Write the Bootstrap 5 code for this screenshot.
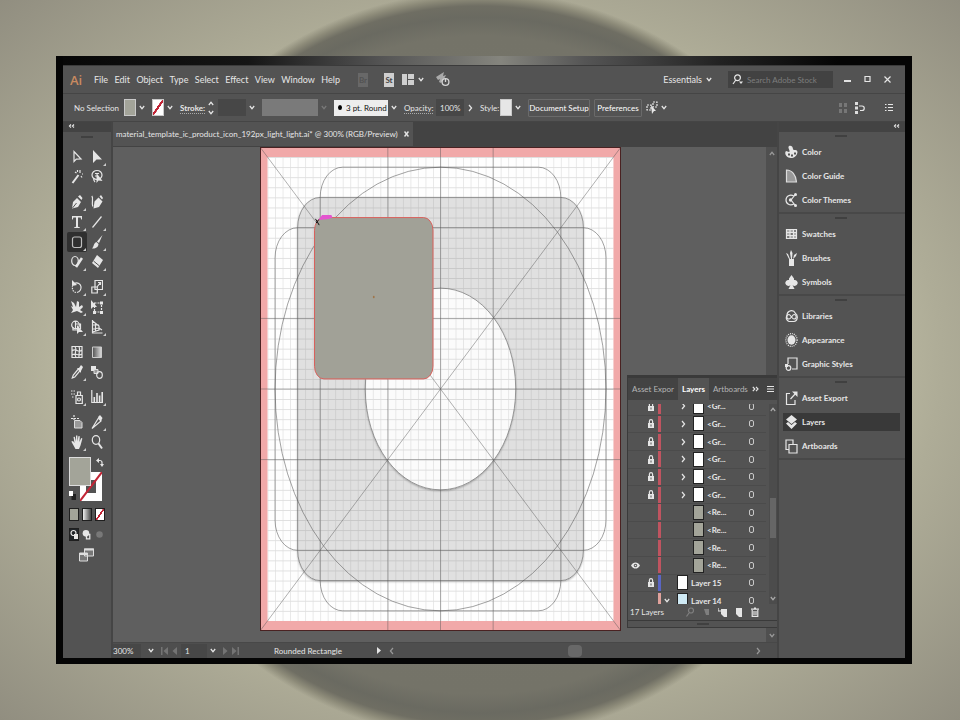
<!DOCTYPE html>
<html lang="en">
<head>
<meta charset="utf-8">
<meta name="viewport" content="width=device-width, initial-scale=1">
<title>Illustrator workspace</title>
<link href="https://cdn.jsdelivr.net/npm/bootstrap@5.3.0/dist/css/bootstrap.min.css" rel="stylesheet">
<style>
:root{--panel:#535353;--dark:#434343;--line:#454545;--ink:#e6e6e6;--swatch:#a3a499}
body{min-height:100vh;padding:56px 48px 56px 56px;color:var(--ink);line-height:12px;
 font-family:Lato,"Open Sans",sans-serif;font-size:8px;
 background:radial-gradient(circle 374px at 50% 365px,#77766a 0,#747368 88%,#6a6a61 93%,#6f6e63 96%,#8d8b79 98%,transparent 100%),
 radial-gradient(ellipse at 50% 50%,#c4c2a9 50%,#aeac97 68%,#918e80 100%)}
button,input,select{font:inherit;color:inherit;background:none;border:0;padding:0;margin:0;border-radius:0}
input,select{min-width:0;outline-offset:1px}
select{appearance:none}
svg{display:block;flex:none}
.i{fill:none;stroke:currentColor;stroke-width:1.2}
.f{fill:currentColor;stroke:none}
.frame-win{border:solid #050505;border-width:0 7px 6px 7px;background:#050505}
.desk-strip{height:9px;background:linear-gradient(90deg,#070707,#151515 22%,#555 38%,#85857e 52%,#555 62%,#222 78%,#050505 92%)}
.app{background:var(--panel);border-top:1px solid #3b3b3b}
.menubar{height:28px;padding-left:7px;border-bottom:1px solid var(--line)}
.brand{font-family:"Open Sans",sans-serif;font-size:13px;font-weight:600;color:#c98a60;width:24px}
.menus{justify-content:space-between;width:246px;margin-right:18px}
.menus button,.ess{font-size:9px}
.stock{width:10px;height:14px;background:#cfcfcf;color:#444;font-weight:700;line-height:14px;text-align:center}
.stock.off{background:#686868;color:#535353}
.searchbox{width:105px;height:17px;background:#424242}
.searchbox input::placeholder{color:#7d7d7d;opacity:1}
.winbtn{width:20px;height:20px;display:grid;place-items:center}
.ctl{height:28px;padding-left:11px;border-bottom:1px solid var(--line);white-space:nowrap}
.lab{text-decoration:underline dotted #aaa;text-underline-offset:2px}
.lab.heavy{font-weight:700}
.w20{width:20px}.w24{width:24px}.w26{width:26px}.w28{width:28px}.w50{width:50px}
.sw{width:12px;height:17px;background:var(--swatch);border:1px solid #c9c9c9}
.sw.pale{background:#e6e6e6}
.none{background:linear-gradient(125deg,#fff 43%,#c22536 44%,#c22536 56%,#fff 57%)}
.cv{width:12px;height:18px;display:grid;place-items:center}
.cv.off{opacity:.25}
.fld{height:17px;background:#474747}
.profile{width:56px;height:17px;background:#7a7a7a}
.brushsel{width:54px;height:16px;background:#ededed;color:#111;padding-left:4px}
.cbtn{height:18px;width:48px;border:1px solid #6a6a6a;border-radius:1px;text-align:center;color:#fff}
.cbtn.wide{width:62px}
.strip{height:10px;background:var(--dark)}
.tools{width:50px;border-right:2px solid var(--line)}
.grip{width:12px;height:2px;background:#404040}
.toolset{gap:5px;padding:9px 0 0 4px}
.toolgrid{grid-template-columns:20px 20px;grid-auto-rows:20px}
.tb{display:grid;place-items:center;position:relative}
.tb.flyout::after{content:"";position:absolute;right:1px;bottom:1px;border:solid transparent;border-width:0 0 3px 3px;border-bottom-color:#ccc}
.tb.on{background:#2f2f2f;border-radius:2px}
.tb.on svg{color:#bdbdbd}
.fillstroke{position:relative;width:40px;height:46px;margin:0 0 0 2px}
.fillstroke>*{position:absolute}
.sfill{left:0;top:0;width:22px;height:29px;background:var(--swatch);border:1px solid #ddd}
.sstroke{left:11px;top:15px;width:22px;height:29px}
.swap{left:27px;top:1px}.reset{left:0;top:34px}
.minis{gap:3px;padding:0 0 2px 2px}
.mini{width:10px;height:13px;border:1px solid #1f1f1f}
.mini.solid{background:var(--swatch)}.mini.grad{background:linear-gradient(90deg,#eee,#444)}
.tabs{height:25px;background:var(--dark)}
.tab{background:var(--panel);padding:0 4px 0 3px;gap:6px;width:max-content;height:24px;white-space:nowrap}
.canvas{background:#5f5f5f;padding-left:2px}
.board{width:361px;height:484px}
.vs{width:11px;background:#4f4f4f;padding:4px 0}
.status{height:16px;background:#4e4e4e;border-top:1px solid #484848}
.status .fld{height:14px}
.tip{width:138px;text-align:center}
.thumb{width:14px;height:12px;background:#686868;border-radius:4px}
.side{width:128px;border-left:2px solid var(--line)}
.grp{padding:8px 5px 0 4px;border-bottom:2px solid #484848;position:relative}
.grp .grip{position:absolute;left:56px;top:3px}
.pi{height:24px;padding:0 2px;width:100%;font-weight:700;gap:4px;text-align:left}
.pi.on{background:linear-gradient(#393939,#393939) center/100% 18px no-repeat}
.layers{position:absolute;right:0;bottom:14px;width:150px;background:var(--panel);border:solid #3a3a3a;border-width:3px 0 1px 1px}
.ltabs{height:22px;background:var(--dark)}
.ltabs .lt{height:22px;padding:0 4px;color:#b5b5b5}
.ltabs .lt.on{background:var(--panel);color:#fff;font-weight:700}
.lview{height:200px;overflow:hidden;margin-top:4px}
.lrows{height:212px;margin-top:-6px;display:grid;grid-template-rows:repeat(12,minmax(0,1fr));list-style:none;padding:0}
.lr{border-bottom:1px solid #4b4b4b;width:138px}
.lr .eye,.lr .lk{width:15px;height:16px;display:grid;place-items:center}
.lr .bar{width:3px;height:16px;background:#c05460}
.lr .bar.b{background:#5a66c4}.lr .bar.p{background:#e0a29c}
.lr .ex{width:12px;display:grid;place-items:center}
.th{width:11px;height:15px;border:1px solid #222;background:#fff}
.th.g{background:var(--swatch)}.th.s{background:#cfeaf5}
.lname{flex:1;padding-left:3px;font-weight:700;white-space:nowrap}
.tgt{width:5px;height:7px;border:1px solid #c8c8c8;border-radius:2px;margin-right:12px}
.lbar{width:8px;background:#4c4c4c;padding:3px 0}
.lbar i{display:block;width:6px;height:40px;background:#666;margin-top:86px}
.lfoot{height:16px;padding:0 2px}
.lgrip{height:7px;border-top:1px solid #3a3a3a;padding-top:2px}
</style>
<script src="https://cdn.jsdelivr.net/npm/bootstrap@5.3.0/dist/js/bootstrap.bundle.min.js"></script>
</head>
<body class="d-flex">
<svg width="0" height="0" class="position-absolute" aria-hidden="true">
 <symbol id="dn" viewBox="0 0 6 5"><path class="i" d="M.8 1 3 3.7 5.2 1"/></symbol>
 <symbol id="up" viewBox="0 0 6 5"><path class="i" d="M.8 4 3 1.3 5.2 4"/></symbol>
 <symbol id="rt" viewBox="0 0 5 8"><path class="i" d="M1 1 3.6 4 1 7"/></symbol>
 <symbol id="lf" viewBox="0 0 5 8"><path class="i" d="M4 1 1.4 4 4 7"/></symbol>
 <symbol id="first" viewBox="0 0 7 8"><path class="f" d="M0 0h1.500v8H0zM7 0v8L2.500 4z"/></symbol>
 <symbol id="prev" viewBox="0 0 5 8"><path class="f" d="M5 0v8L.5 4z"/></symbol>
 <symbol id="next" viewBox="0 0 5 8"><path class="f" d="M0 0v8l4.500-4z"/></symbol>
 <symbol id="last" viewBox="0 0 7 8"><path class="f" d="M5.500 0H7v8H5.500zM0 0v8l4.500-4z"/></symbol>
 <symbol id="lock" viewBox="0 0 6 9"><path class="f" d="M0 4h6v5H0z"/><path class="i" d="M1.400 4V2.200a1.600 1.600 0 0 1 3.200 0V4"/><path stroke="#555" d="M3 5.500v2"/></symbol>
 <symbol id="eye" viewBox="0 0 9 7"><path class="f" d="M0 3.500C2-.6 7-.6 9 3.500 7 7.600 2 7.600 0 3.500z"/><circle cx="4.500" cy="3.500" r="1.700" fill="#535353"/><circle cx="4.500" cy="3.500" r=".8" class="f"/></symbol>
</svg>

<main class="frame-win d-flex flex-column flex-grow-1">
 <div class="desk-strip"></div>
 <div class="app d-flex flex-column flex-grow-1">

  <header class="menubar d-flex align-items-center">
   <span class="brand">Ai</span>
   <nav class="menus d-flex align-items-center" aria-label="Main menu">
    <button>File</button><button>Edit</button><button>Object</button><button>Type</button><button>Select</button><button>Effect</button><button>View</button><button>Window</button><button>Help</button>
   </nav>
   <button class="stock off">Br</button>
   <button class="stock mx-2 ms-3">St</button>
   <button class="d-flex align-items-center gap-1" aria-label="Arrange documents"><svg width="12" height="11" viewBox="0 0 12 11"><path fill="#cfcfcf" d="M0 0h5v11H0zM6 0h6v5H6zM6 6h6v5H6z"/></svg><svg width="6" height="5"><use href="#dn"/></svg></button>
   <button class="ms-2" aria-label="GPU performance"><svg class="ms-1" width="14" height="15" viewBox="0 0 14 15"><path fill="#aaa" d="M0 5 8 0 7 4l3-1-2 4-3 4-2-1 1-3-2 1z"/><circle cx="9.500" cy="10" r="3.400" fill="#535353" stroke="#d5d5d5" stroke-width="1.300"/><path stroke="#d5d5d5" stroke-width="1.300" d="M9.500 6v4"/></svg></button>
   <div class="ms-auto d-flex align-items-center pe-1">
    <button class="ess d-flex align-items-center gap-1 me-3">Essentials <svg width="6" height="5"><use href="#dn"/></svg></button>
    <label class="searchbox d-flex align-items-center px-1 gap-1"><svg width="11" height="11" viewBox="0 0 11 11"><circle class="i" cx="5.500" cy="3.800" r="2.900"/><path class="i" d="M3.800 6 1 10"/><path class="f" d="M7 7.500h4L9 10z"/></svg><input type="search" class="flex-grow-1 w-50" placeholder="Search Adobe Stock" aria-label="Search Adobe Stock"></label>
    <div class="d-flex align-self-start ms-1">
     <button class="winbtn" aria-label="Minimize"><svg width="7" height="8" viewBox="0 0 7 8"><path stroke="#e2e2e2" stroke-width="2" d="M0 5h7"/></svg></button>
     <button class="winbtn" aria-label="Maximize"><svg width="7" height="8" viewBox="0 0 7 8"><path class="i" d="M1 .5h5v5H1z"/></svg></button>
     <button class="winbtn me-1" aria-label="Close"><svg width="7" height="8" viewBox="0 0 7 8"><path class="i" d="m.5.5 6 6M6.500.5l-6 6"/></svg></button>
    </div>
   </div>
  </header>

  <section class="ctl d-flex align-items-center" aria-label="Control bar">
   <span class="w50">No Selection</span>
   <button class="sw" aria-label="Fill"></button><button class="cv me-1" aria-label="Fill options"><svg width="6" height="5"><use href="#dn"/></svg></button>
   <button class="sw none" aria-label="Stroke colour"></button><button class="cv me-1" aria-label="Stroke options"><svg width="6" height="5"><use href="#dn"/></svg></button>
   <label class="lab heavy w24" for="strokew">Stroke:</label>
   <span class="d-flex flex-column gap-1 me-1 ms-1"><svg width="6" height="5"><use href="#up"/></svg><svg width="6" height="5"><use href="#dn"/></svg></span>
   <input id="strokew" class="fld w28"><button class="cv me-1" aria-label="Stroke weights"><svg width="6" height="5"><use href="#dn"/></svg></button>
   <button class="profile" aria-label="Width profile"></button><span class="cv off me-1"><svg width="6" height="5"><use href="#dn"/></svg></span>
   <button class="brushsel d-flex align-items-center gap-1"><svg width="4" height="5" viewBox="0 0 4 5"><ellipse cx="2" cy="2.500" rx="2" ry="2.500"/></svg>3 pt. Round</button><button class="cv" aria-label="Brushes list"><svg width="6" height="5"><use href="#dn"/></svg></button>
   <label class="lab w28 ms-1" for="opac">Opacity:</label>
   <input id="opac" class="fld w28 ps-1 ms-1" value="100%"><button class="cv me-1" aria-label="Opacity slider"><svg width="5" height="8"><use href="#rt"/></svg></button>
   <span class="w20">Style:</span><button class="sw pale" aria-label="Graphic style"></button><button class="cv" aria-label="Styles list"><svg width="6" height="5"><use href="#dn"/></svg></button>
   <button class="cbtn wide mx-1">Document Setup</button><button class="cbtn me-1">Preferences</button>
   <button class="d-flex align-items-center" aria-label="Select similar"><svg width="12" height="14" viewBox="0 0 12 14"><path class="i" stroke-dasharray="2 1" d="M1 4h4v5H1zM7 1h4v5H7z"/><path class="f" d="m5 4 5 6H8l-2 3z"/></svg><span class="cv"><svg width="6" height="5"><use href="#dn"/></svg></span></button>
   <div class="ms-auto d-flex align-items-center gap-2 pe-2 me-1">
    <svg width="8" height="10" viewBox="0 0 8 10"><path fill="#777" d="M0 0h3v4H0zM5 0h3v4H5zM0 6h3v4H0zM5 6h3v4H5z"/></svg>
    <button class="me-2" aria-label="Align to"><svg width="10" height="12" viewBox="0 0 10 12"><path fill="#ddd" d="M0 0h3v3H0zM0 4.500h3v3H0zM0 9h3v3H0z"/><path class="i" d="M4 4h3a2 2 0 0 1 0 4.500H5"/></svg></button>
    <button class="ms-1" aria-label="Control menu"><svg width="8" height="9" viewBox="0 0 8 9"><path class="i" d="M0 1.500h1.500M3 1.500h5M0 4.500h1.500M3 4.500h5M0 7.500h1.500M3 7.500h5"/></svg></button>
   </div>
  </section>

  <div class="d-flex flex-grow-1">
   <aside class="tools">
    <div class="strip ps-1"><svg width="10" height="8" viewBox="0 0 10 8"><path class="i" d="M4 2.500 2.500 4 4 5.500M7 2.500 5.500 4 7 5.500"/></svg></div>
    <div class="grip mx-auto mt-1"></div>
    <div class="toolset d-flex flex-column">
     <div class="toolgrid d-grid">
      <button class="tb" aria-label="Selection"><svg width="12" height="16" viewBox="0 0 12 16"><path class="i" d="M3 2.500v10l2.300-2.400L10 10z"/></svg></button>
      <button class="tb flyout" aria-label="Direct selection"><svg width="12" height="16" viewBox="0 0 12 16"><path class="f" d="M2 1v13l3.500-3.500H11z"/></svg></button>
      <button class="tb" aria-label="Magic wand"><svg width="12" height="16" viewBox="0 0 12 16"><path stroke="currentColor" stroke-width="2" d="m1.500 14 6-8"/><path class="i" d="M9 1v3M10 7l1 1.500M4 3l1.500 1M11 5h1M6.500 1v2"/></svg></button>
      <button class="tb" aria-label="Lasso"><svg width="12" height="16" viewBox="0 0 12 16"><ellipse class="i" cx="6" cy="6" rx="5" ry="4.500"/><path class="i" d="M3 9c-1 2 0 3 1 4M4 4.500h4M4 7h3"/><path class="f" d="M5.500 4v10l2-2.500 4 .5z"/></svg></button>
     </div>
     <div class="toolgrid d-grid">
      <button class="tb flyout" aria-label="Pen"><svg width="12" height="16" viewBox="0 0 12 16"><path class="f" d="M1 14.500 2 8l4-4 4 4-3 5zM7 2.500l2-1.500 2.500 3L10.500 6z"/><path stroke="#535353" d="m1.500 14 4-5"/></svg></button>
      <button class="tb" aria-label="Curvature"><svg width="12" height="16" viewBox="0 0 12 16"><path class="i" d="M.8 2c2 2-.5 6 1 10.500"/><path class="f" d="m2.500 14.500 1-7 4-4 4 4-3.500 5.500zM8.500 2.500l1.500-1.500 2 3-1 1.500z"/></svg></button>
      <button class="tb flyout" aria-label="Type"><svg width="12" height="16" viewBox="0 0 12 16"><path class="f" d="M1 2h10v3.500h-.8L9.600 3.400H7v9.400l1.800.5v.7H3.200v-.7l1.800-.5V3.400H2.400l-.6 2.100H1z"/></svg></button>
      <button class="tb flyout" aria-label="Line segment"><svg width="12" height="16" viewBox="0 0 12 16"><path class="i" d="m1.500 13.500 9-11"/></svg></button>
      <button class="tb on flyout" aria-label="Rounded rectangle" aria-pressed="true"><svg width="12" height="16" viewBox="0 0 12 16"><rect class="i" x="1.500" y="3" width="9" height="10.500" rx="2"/></svg></button>
      <button class="tb flyout" aria-label="Paintbrush"><svg width="12" height="16" viewBox="0 0 12 16"><path class="f" d="M11.500 1 8 9 6 7.500zM5.500 8l2 2c0 3-3 5-6.500 4.500C3 13 2.500 9 5.500 8z"/></svg></button>
      <button class="tb flyout" aria-label="Shaper"><svg width="12" height="16" viewBox="0 0 12 16"><ellipse class="i" cx="4" cy="7" rx="3.300" ry="4.500"/><path stroke="currentColor" stroke-width="2.600" d="m5 13 6-9"/></svg></button>
      <button class="tb flyout" aria-label="Eraser"><svg width="12" height="16" viewBox="0 0 12 16"><path class="f" d="m6 1 6 5-5 8-6-5z"/><path stroke="#535353" d="m2.500 7 6 5"/></svg></button>
     </div>
     <div class="toolgrid d-grid">
      <button class="tb flyout" aria-label="Rotate"><svg width="12" height="16" viewBox="0 0 12 16"><path class="i" d="M3 4.500c8-3 9.500 7.500 3 9"/><path class="i" stroke-dasharray="1.500 1" d="M5 13.500C2 13 1 10 1.500 7"/><path class="f" d="M1 1v6l5-1z"/></svg></button>
      <button class="tb flyout" aria-label="Scale"><svg width="12" height="16" viewBox="0 0 12 16"><path class="i" d="M4 1.500h7.500v9H4zM.8 8h5.500v6H.8zM6 8l3.500-4.500M7 3.500h2.500V6"/></svg></button>
      <button class="tb flyout" aria-label="Width"><svg width="12" height="16" viewBox="0 0 12 16"><path class="f" d="M0 2 3 4l2 4 1-6 2 1v5l3-2 1 2-3 3 3 2-2 1-4-2-6 2 2-3-2-4 2 1z"/></svg></button>
      <button class="tb" aria-label="Free transform"><svg width="12" height="16" viewBox="0 0 12 16"><path class="i" stroke-dasharray="2 1" d="M3.500 4h7v9h-7z"/><path class="f" d="M0 1v9l2-2h4zM9 2.500h3v3H9zM9 12h3v3H9zM2 12h3v3H2z"/></svg></button>
      <button class="tb flyout" aria-label="Shape builder"><svg width="12" height="16" viewBox="0 0 12 16"><circle class="i" cx="4.500" cy="6" r="3.800"/><path class="i" d="M4.500 5h5v5M2 8v3h4M4.500 2v8"/><path class="f" d="M6 6v9l2-2h4z"/></svg></button>
      <button class="tb flyout" aria-label="Perspective grid"><svg width="12" height="16" viewBox="0 0 12 16"><path class="i" d="M1.500 1v13h10M1.500 2 8 7v4l-6.500 2M1.500 6H8M1.500 10 8 9M4.500 4v8M8 9l3 2"/></svg></button>
     </div>
     <div class="toolgrid d-grid">
      <button class="tb" aria-label="Mesh"><svg width="12" height="16" viewBox="0 0 12 16"><path class="i" d="M1 2.500h10v11H1zM1 7c4-4 6 3 10-1M1 11c4-3 6 2 10-1M4 2.500c3 4-2 7 1 11M8 2.500c2 4-1 7 0 11"/></svg></button>
      <button class="tb" aria-label="Gradient"><svg width="12" height="16" viewBox="0 0 12 16"><defs><linearGradient id="gr"><stop stop-color="#505050"/><stop offset="1" stop-color="#ddd"/></linearGradient></defs><path fill="url(#gr)" stroke="#ccc" d="M1.500 3h9v10.500h-9z"/></svg></button>
      <button class="tb flyout" aria-label="Eyedropper"><svg width="12" height="16" viewBox="0 0 12 16"><path class="i" d="m1.300 14 1-3 5-6 1.500 2-5 6z"/><path class="f" d="m6 4 2 0 2-3 2 2-2 4v2z"/></svg></button>
      <button class="tb" aria-label="Blend"><svg width="12" height="16" viewBox="0 0 12 16"><path class="f" d="M0 2h5v5H0z"/><path fill="#999" stroke="#ddd" d="M3 5.500h4v4H3z"/><ellipse class="i" cx="8.500" cy="11" rx="2.800" ry="3.300"/></svg></button>
     </div>
     <div class="toolgrid d-grid">
      <button class="tb flyout" aria-label="Symbol sprayer"><svg width="12" height="16" viewBox="0 0 12 16"><path class="i" d="M5 6.500h6.300v8H5zM6.500 6V3h3v3"/><circle class="i" cx="8" cy="10.500" r="1.500"/><path class="i" stroke-dasharray="1.500 1" d="M0 2h5M0 5h4M1 8h2"/></svg></button>
      <button class="tb flyout" aria-label="Column graph"><svg width="12" height="16" viewBox="0 0 12 16"><path class="i" d="M.8 1v12.500H12"/><path stroke="currentColor" stroke-width="1.600" d="M3.300 13V8M6 13V4M8.600 13V6.500M11.200 13V3"/></svg></button>
     </div>
     <div class="toolgrid d-grid">
      <button class="tb" aria-label="Artboard"><svg width="12" height="16" viewBox="0 0 12 16"><path fill="#999" stroke="#ddd" d="M3.500 6.500H9l2 2v5.500H3.500z"/><path class="i" stroke-dasharray="2 1" d="M0 4.500h8M3 1v5"/></svg></button>
      <button class="tb flyout" aria-label="Slice"><svg width="12" height="16" viewBox="0 0 12 16"><path class="i" d="M1 14.500 7.500 4 10 7z"/><path class="f" d="m7 3 2-2 2.500 3-1.500 3z"/></svg></button>
      <button class="tb flyout" aria-label="Hand"><svg width="12" height="16" viewBox="0 0 12 16"><path class="f" d="M.3 7.500 2 7l1.500 2L2.500 3l1.300-.3L5 7.500V1.500h1.400v6L7.500 2l1.300.3-.4 5.700 1.800-4 1.200.6-1.900 7L8 15H4.500z"/></svg></button>
      <button class="tb" aria-label="Zoom"><svg width="12" height="16" viewBox="0 0 12 16"><ellipse class="i" cx="5" cy="6" rx="3.700" ry="4.300"/><path stroke="currentColor" stroke-width="2" d="m7.500 9.500 3.500 5"/></svg></button>
     </div>
     <div class="fillstroke">
      <button class="sstroke" aria-label="Stroke"><svg width="22" height="29" viewBox="0 0 22 29"><path fill="#fff" fill-rule="evenodd" d="M0 0h22v29H0zM6 8h10v13H6z"/><path stroke="#c22536" stroke-width="2" d="M0 29 22 0"/></svg></button>
      <button class="sfill" aria-label="Fill colour"></button>
      <svg class="swap" width="8" height="9" viewBox="0 0 8 9"><path class="i" d="M2 2.500h2a2 2 0 0 1 2 2V7"/><path class="f" d="M0 2.500 3 0v5zM4 6h4L6 9z"/></svg>
      <svg class="reset" width="7" height="9" viewBox="0 0 7 9"><path fill="#222" d="M2.500 3H7v6H2.500z"/><path fill="#fff" d="M0 0h4v5H0z"/></svg>
     </div>
     <div class="minis d-flex">
      <button class="mini solid" aria-label="Color"></button><button class="mini grad" aria-label="Gradient fill"></button><button class="mini none" aria-label="No fill"></button>
     </div>
     <div class="minis d-flex">
      <button class="mini bg-dark" aria-label="Draw normal"><svg width="8" height="11" viewBox="0 0 8 11"><circle class="i" cx="3.500" cy="4" r="2.500"/><path class="f" d="M4 5h4v5H4z"/></svg></button>
      <button class="mini border-0" aria-label="Draw behind"><svg width="9" height="12" viewBox="0 0 8 11"><circle class="f" cx="3.500" cy="4" r="3"/><path class="i" d="M4 5h3v4H4z"/></svg></button>
      <button class="mini border-0 opacity-25" aria-label="Draw inside"><svg width="9" height="12" viewBox="0 0 8 11"><circle class="f" cx="4" cy="5" r="3"/></svg></button>
     </div>
     <button class="ms-2 ps-1" aria-label="Screen mode"><svg width="15" height="14" viewBox="0 0 15 14"><path fill="#777" stroke="#ddd" d="M5.500 1h9v7h-9zM.5 5h8v8h-8z"/><path stroke="#ddd" stroke-width="2" d="M5 1.500h10M0 6h9"/></svg></button>
    </div>
   </aside>

   <section class="d-flex flex-column flex-grow-1" aria-label="Document">
    <div class="tabs">
     <div class="tab d-flex align-items-center"><span>material_template_ic_product_icon_192px_light_light.ai* @ 300% (RGB/Preview)</span><button aria-label="Close tab"><svg width="5" height="6" viewBox="0 0 5 6"><path stroke="currentColor" stroke-width="1.500" d="m.5.5 4 5m0-5-4 5"/></svg></button></div>
    </div>
    <div class="d-flex flex-grow-1 position-relative">
     <div class="canvas flex-grow-1 d-flex justify-content-center align-items-start">
      <svg class="board" viewBox="0 0 192 192" preserveAspectRatio="none" role="img" aria-label="Icon template artboard">
       <defs><pattern id="g" width="4" height="4" patternUnits="userSpaceOnUse"><path d="M0 0V4M0 0H4" fill="none" stroke="#777" stroke-opacity=".24" stroke-width=".7"/></pattern>
       <filter id="sh" x="-10%" y="-10%" width="120%" height="120%"><feDropShadow dx="0" dy=".4" stdDeviation=".5" flood-opacity=".35"/></filter></defs>
       <path fill="#fefefe" d="M0 0h192v192H0z"/>
       <rect x="20" y="20" width="152" height="152" rx="12" fill="#e0e0e0" filter="url(#sh)"/>
       <circle cx="96" cy="96" r="40" fill="#fbfbfb" filter="url(#sh)"/>
       <path fill="url(#g)" d="M4 4h184v184H4z"/>
       <path fill="#f1a9a9" fill-rule="evenodd" d="M0 0h192v192H0zM4 4v184h184V4z"/>
       <g fill="none" stroke="#555" stroke-opacity=".55">
        <path vector-effect="non-scaling-stroke" stroke-opacity=".45" d="M0 0 192 192M192 0 0 192M68 0v192M96 0v192M124 0v192M0 68h192M0 96h192M0 124h192"/>
        <circle vector-effect="non-scaling-stroke" cx="96" cy="96" r="88"/><circle vector-effect="non-scaling-stroke" cx="96" cy="96" r="40"/>
        <rect vector-effect="non-scaling-stroke" x="20" y="20" width="152" height="152" rx="12"/>
        <rect vector-effect="non-scaling-stroke" x="32" y="8" width="128" height="176" rx="12"/>
        <rect vector-effect="non-scaling-stroke" x="8" y="32" width="176" height="128" rx="12"/>
       </g>
       <rect vector-effect="non-scaling-stroke" x="29" y="28" width="63" height="64" rx="5" fill="#a1a197" stroke="#d9605c"/>
       <circle cx="60.500" cy="59.500" r=".5" fill="#a0764c"/>
       <path fill="#e455cf" d="m31 29 2-2 5 0 .5 1-2 .6z"/>
       <path vector-effect="non-scaling-stroke" stroke="#111" d="m29.500 28.500 2 2.500M31.200 28.800 29.800 30.200"/>
       <path vector-effect="non-scaling-stroke" fill="none" stroke="#4a2222" stroke-width="2" d="M0 0h192v192H0z"/>
      </svg>
     </div>
     <div class="vs d-flex flex-column align-items-center justify-content-between"><svg width="6" height="5" color="#999"><use href="#up"/></svg><svg width="6" height="5" color="#999"><use href="#dn"/></svg></div>

     <section class="layers" aria-label="Layers panel">
      <div class="ltabs d-flex align-items-center"><button class="lt text-nowrap">Asset Expor</button><button class="lt on">Layers</button><button class="lt">Artboards</button>
       <button class="ms-auto me-2" aria-label="Collapse"><svg width="7" height="6" viewBox="0 0 7 6"><path class="i" d="m.8.8 2 2.200-2 2.200M4 .8 6 3 4 5.200"/></svg></button><button class="me-1" aria-label="Panel menu"><svg width="7" height="8" viewBox="0 0 7 8"><path class="i" d="M0 1.500h7M0 4h7M0 6.500h7"/></svg></button></div>
      <div class="d-flex lview"><ul class="lrows mb-0" id="rows"></ul>
       <div class="lbar ms-auto d-flex flex-column align-items-center"><svg width="6" height="5" color="#aaa"><use href="#up"/></svg><i></i><svg class="mt-auto" width="6" height="5" color="#aaa"><use href="#dn"/></svg></div></div>
      <div class="lfoot d-flex align-items-center"><span class="me-auto">17 Layers</span>
       <div class="d-flex gap-2 pe-3">
        <svg width="8" height="10" viewBox="0 0 8 10" opacity=".3"><circle class="i" cx="5" cy="3.500" r="2.500"/><path class="i" d="M3 6 .5 9.500"/></svg>
        <svg width="8" height="10" viewBox="0 0 8 10" opacity=".3"><path class="f" d="M2 2h5v6H4z"/></svg>
        <button aria-label="New sublayer"><svg width="9" height="10" viewBox="0 0 9 10"><path class="f" d="M3 2h6v8H6L3 7z"/><path class="i" d="M0 1v3h3"/></svg></button>
        <button aria-label="New layer"><svg width="8" height="10" viewBox="0 0 8 10"><path class="f" d="M1 1h6v9H4L1 7z"/></svg></button>
        <button aria-label="Delete"><svg width="8" height="10" viewBox="0 0 8 10"><path class="i" d="M0 2.200h8M1.200 3v6.400h5.600V3M3 4v4M5 4v4M3 1h2"/></svg></button>
       </div></div>
      <div class="lgrip"><div class="grip mx-auto"></div></div>
     </section>
    </div>
    <footer class="status d-flex align-items-center">
     <select class="fld w28" aria-label="Zoom level"><option>300%</option></select><span class="cv ms-1"><svg width="6" height="5"><use href="#dn"/></svg></span>
     <span class="d-flex gap-1 px-1 opacity-25"><svg width="7" height="8"><use href="#first"/></svg><svg width="5" height="8"><use href="#prev"/></svg></span>
     <select class="fld ps-1 w26" aria-label="Artboard number"><option>1</option></select><span class="cv"><svg width="6" height="5"><use href="#dn"/></svg></span>
     <span class="d-flex gap-1 ps-1 opacity-25"><svg width="5" height="8"><use href="#next"/></svg><svg width="7" height="8"><use href="#last"/></svg></span>
     <span class="tip">Rounded Rectangle</span>
     <svg width="4" height="7" viewBox="0 0 4 7"><path class="f" d="M0 0 4 3.500 0 7z"/></svg><svg class="ms-2" width="5" height="8" color="#999"><use href="#lf"/></svg>
     <span class="thumb mx-auto"></span>
     <svg class="me-3" width="5" height="8" color="#999"><use href="#rt"/></svg>
    </footer>
   </section>

   <aside class="side" aria-label="Panels">
    <div class="strip d-flex justify-content-end pe-1"><svg width="8" height="8" viewBox="0 0 8 8"><path class="i" d="M3 2.500 1.500 4 3 5.500M6 2.500 4.500 4 6 5.500"/></svg></div>
    <div class="grp"><div class="grip"></div>
     <button class="pi d-flex align-items-center"><svg width="13" height="14" viewBox="0 0 13 14"><path class="f" fill-rule="evenodd" d="M4 1c5-1 3 4 5 4s3 0 3.500 2C12 11 9 13 6 13 1 13-1 8 1 6l3 1c2-1-2-4 0-6zM3 8.500h2v2H3zM6 9.500h2v2H6zM9 7.500h2v2H9z"/></svg>Color</button>
     <button class="pi d-flex align-items-center"><svg width="13" height="14" viewBox="0 0 13 14"><path fill="#999" stroke="#ddd" stroke-width="1.200" d="M1.500 1C7 1 11 6 11.500 13h-10z"/></svg>Color Guide</button>
     <button class="pi d-flex align-items-center"><svg width="13" height="14" viewBox="0 0 13 14"><path class="i" d="M9 3C5 1 1 3 1 7s4 6 8 4M10 2 6 7l4 5"/><circle class="f" cx="10.500" cy="1.500" r="1.500"/><circle class="f" cx="10.500" cy="12.500" r="1.500"/><circle class="f" cx="5.500" cy="7" r="1.700"/></svg>Color Themes</button></div>
    <div class="grp"><div class="grip"></div>
     <button class="pi d-flex align-items-center"><svg width="13" height="14" viewBox="0 0 13 14"><path fill="#aaa" d="M1.500 2.500h10v9h-10z"/><path fill="#777" d="M5 6h3v3H5zM9 3h2v3H9zM2 9h3v2H2z"/><path class="i" d="M1.500 2.500h10v9h-10zM1.500 5.500h10M1.500 8.500h10M5 2.500v9M8.500 2.500v9"/></svg>Swatches</button>
     <button class="pi d-flex align-items-center"><svg width="13" height="16" viewBox="0 0 13 16"><path class="f" d="M4 9h5v7H4zM6 0l1.500 3L7 9H6L5 3zM1 3l2 1 2 5H4zM12 3l-1 3-3 3 1-4z"/></svg>Brushes</button>
     <button class="pi d-flex align-items-center"><svg width="13" height="14" viewBox="0 0 13 14"><path class="f" d="M6.500 0 9 3.500v1.500a3 3 0 1 1-1.500 5l2 4h-6l2-4A3 3 0 1 1 4 5V3.500z"/></svg>Symbols</button></div>
    <div class="grp"><div class="grip"></div>
     <button class="pi d-flex align-items-center"><svg width="13" height="14" viewBox="0 0 13 14"><path class="i" d="M4 12.500a4 4 0 0 1-2-6C2 2 8-.5 10.500 4.500c3 2 2 8-1.500 8z"/><path class="i" d="M4 10a2.200 2.200 0 0 1 0-4.500c1.500 0 3 4.500 5 4.500a2.200 2.200 0 0 0 0-4.500C7.500 5.500 6 10 4 10z"/></svg>Libraries</button>
     <button class="pi d-flex align-items-center"><svg width="13" height="14" viewBox="0 0 13 14"><ellipse class="f" cx="6.500" cy="7" rx="4" ry="4.700"/><ellipse class="i" stroke-dasharray="1 1" cx="6.500" cy="7" rx="5.600" ry="6.400"/></svg>Appearance</button>
     <button class="pi d-flex align-items-center"><svg width="13" height="14" viewBox="0 0 13 14"><path class="i" d="M3 7V1h9v11H7"/><path class="f" d="M0 7h3v3H0z"/><circle class="i" cx="3.500" cy="11" r="2.300"/></svg>Graphic Styles</button></div>
    <div class="grp"><div class="grip"></div>
     <button class="pi d-flex align-items-center"><svg width="13" height="15" viewBox="0 0 13 15"><path class="i" d="M5 2.500H1.500v11H10V9M5.500 8 11 2"/><path class="f" d="M7 .5h5.500V6z"/></svg>Asset Export</button>
     <button class="pi on d-flex align-items-center" aria-pressed="true"><svg width="13" height="14" viewBox="0 0 13 14"><path class="f" d="M6.500 0 12 4.500 6.500 9 1 4.500zM1 8.500l2-1.500 3.500 3L10 7l2 1.500L6.500 14z"/></svg>Layers</button>
     <button class="pi d-flex align-items-center"><svg width="13" height="15" viewBox="0 0 13 15"><path class="i" d="M4 10.500H1V1h7v4M4 5.500h8V14H4z"/></svg>Artboards</button></div>
   </aside>
  </div>
 </div>
</main>
<script>
const ic=(n,w,h)=>`<svg width="${w}" height="${h}"><use href="#${n}"/></svg>`;
const row=(r)=>`<li class="lr d-flex align-items-center"><button class="eye" aria-label="Visibility">${r.eye?ic('eye',9,7):''}</button><button class="lk" aria-label="Lock">${r.lock?ic('lock',6,9):''}</button><span class="bar ${r.bar||''}"></span>${r.top?`<span class="ex">${r.open?ic('dn',6,5):''}</span>`:`<span class="ex ms-3">${r.lock?ic('rt',5,8):''}</span>`}<span class="th ms-1 ${r.th||''}"></span><span class="lname">${r.name}</span><button class="tgt" aria-label="Target"></button></li>`;
const data=[...Array(6).fill({lock:1,name:'&lt;Gr...'}),...Array(3).fill({th:'g',name:'&lt;Re...'}),{eye:1,th:'g',name:'&lt;Re...'},{lock:1,top:1,bar:'b',name:'Layer 15'},{top:1,open:1,bar:'p',th:'s',name:'Layer 14'}];
document.getElementById('rows').innerHTML=data.map(row).join('');
</script>
</body>
</html>
